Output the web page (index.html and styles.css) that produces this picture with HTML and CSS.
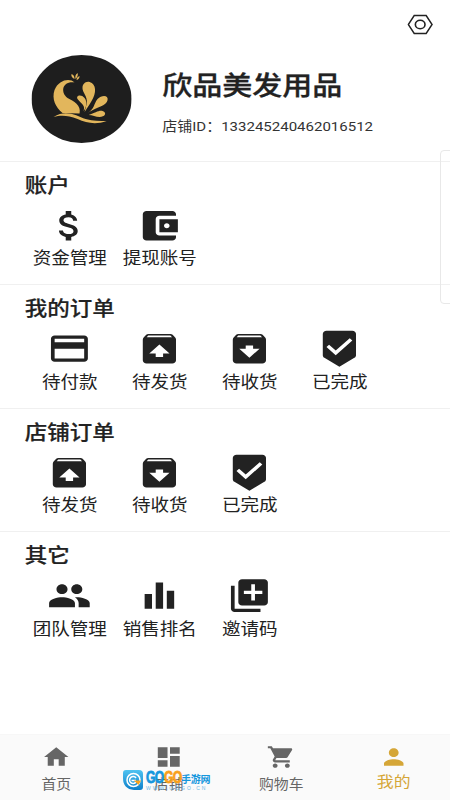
FILE: index.html
```
<!DOCTYPE html>
<html lang="zh-CN">
<head>
    <meta charset="UTF-8">
    <meta name="viewport" content="width=device-width, initial-scale=1.0">
    <title>我的</title>
    <link rel="stylesheet" href="styles.css">
</head>
<body>
    <svg class="defs" width="0" height="0">
        <symbol id="unarchive" viewBox="0 0 24 24"><path d="M20.55 5.22l-1.39-1.68C18.88 3.21 18.47 3 18 3H6c-.47 0-.88.21-1.15.55L3.46 5.22C3.17 5.57 3 6.01 3 6.5V19c0 1.1.89 2 2 2h14c1.1 0 2-.9 2-2V6.5c0-.49-.17-.93-.45-1.28zM12 9.5l5.5 5.5H14v2h-4v-2H6.5L12 9.5zM5.12 5l.82-1h12l.93 1H5.12z"/></symbol>
        <symbol id="archive" viewBox="0 0 24 24"><path d="M20.54 5.23l-1.39-1.68C18.88 3.21 18.47 3 18 3H6c-.47 0-.88.21-1.16.55L3.46 5.23C3.17 5.57 3 6.02 3 6.5V19c0 1.1.9 2 2 2h14c1.1 0 2-.9 2-2V6.5c0-.48-.17-.93-.46-1.27zM12 17.5L6.5 12H10v-2h4v2h3.500L12 17.5zM5.12 5l.81-1h12l.94 1H5.12z"/></symbol>
        <symbol id="done" viewBox="0 0 24 24"><path d="M19 1H5c-1.100 0-2 .9-2 2v12.930c0 .69.350 1.300.880 1.660L12 23l8.110-5.410c.53-.36.88-.97.89-1.660V3c0-1.100-.9-2-2-2zm-9 15l-5-5 1.410-1.410L10 13.170l7.590-7.590L19 7l-9 9z"/></symbol>
    </svg>
    <div class="page">
        <header class="profile">
            <svg class="settings" viewBox="0 0 24 22">
                <path d="M6.500 1.500h11L23 11l-5.500 9.500h-11L1 11z"/>
                <circle cx="12" cy="11" r="4.500"/>
            </svg>
            <svg class="avatar" viewBox="0 0 100 88" preserveAspectRatio="none">
                <ellipse class="avatar-bg" cx="50" cy="44" rx="50" ry="44"/>
                <path d="M43 27.500C38 22.500 27 25 23 35C20 44 24 52 31 58L48 58.500C50 50 42 46 36 43C29 38 30 26 43 27.500Z"/>
                <path d="M53 57C55 49 57 46 53 39C48 31 53 26 58 27C65 29 65 38 60 46C57 51 55 54 53 57Z"/>
                <path d="M52 56C54 50 50 49 46 44C44 40 50 39 53 43C56 47 55 52 52 56Z"/>
                <path d="M56 58C63 54 62 49 66 44C70 40 77 40 76 45C75 51 65 52 56 58Z"/>
                <path d="M57 60C64 58 67 55 71 56C76 58 73 62 68 62C64 62 61 60 57 60Z"/>
                <path d="M22 62C35 54 45 61 54 64C62 66 68 66 75 66C64 70 55 68 46 64C36 60 29 60 22 62Z"/>
                <path d="M43 24Q39 22 40 19Q43 20 43 24ZM44 24Q43 20 46 18Q47 21 44 24ZM45 25Q45 22 48 21Q48 24 45 25Z"/>
            </svg>
            <div class="profile-text">
                <h1>欣品美发用品</h1>
                <p>店铺ID：133245240462016512</p>
            </div>
        </header>
        <main>
            <section>
                <h2>账户</h2>
                <ul>
                    <li>
                        <svg viewBox="0 0 24 24"><path d="M11.800 10.900c-2.270-.59-3-1.200-3-2.150 0-1.090 1.010-1.850 2.700-1.850 1.780 0 2.440.85 2.500 2.100h2.210c-.07-1.720-1.120-3.300-3.210-3.810V3h-3v2.160c-1.940.42-3.500 1.680-3.500 3.610 0 2.310 1.910 3.460 4.700 4.130 2.500.6 3 1.480 3 2.410 0 .69-.49 1.790-2.700 1.790-2.060 0-2.870-.92-2.980-2.100h-2.200c.12 2.190 1.760 3.420 3.680 3.830V21h3v-2.150c1.950-.37 3.500-1.500 3.500-3.550 0-2.840-2.430-3.810-4.700-4.400z"/></svg>
                        资金管理
                    </li>
                    <li>
                        <svg viewBox="0 0 24 24"><path d="M21 18v1c0 1.100-.9 2-2 2H5c-1.110 0-2-.9-2-2V5c0-1.100.89-2 2-2h14c1.100 0 2 .9 2 2v1h-9c-1.110 0-2 .9-2 2v8c0 1.100.89 2 2 2h9zm-9-2h10V8H12v8zm4-2.500c-.83 0-1.500-.67-1.500-1.500s.67-1.500 1.500-1.500 1.500.67 1.500 1.500-.67 1.500-1.500 1.500z"/></svg>
                        提现账号
                    </li>
                </ul>
            </section>
            <section>
                <h2>我的订单</h2>
                <ul>
                    <li>
                        <svg viewBox="0 0 24 24"><path d="M20 4H4c-1.110 0-1.990.89-1.990 2L2 18c0 1.110.89 2 2 2h16c1.110 0 2-.89 2-2V6c0-1.110-.89-2-2-2zm0 14H4v-6h16v6zm0-10H4V6h16v2z"/></svg>
                        待付款
                    </li>
                    <li><svg><use href="#unarchive"/></svg>待发货</li>
                    <li><svg><use href="#archive"/></svg>待收货</li>
                    <li><svg><use href="#done"/></svg>已完成</li>
                </ul>
            </section>
            <section>
                <h2>店铺订单</h2>
                <ul>
                    <li><svg><use href="#unarchive"/></svg>待发货</li>
                    <li><svg><use href="#archive"/></svg>待收货</li>
                    <li><svg><use href="#done"/></svg>已完成</li>
                </ul>
            </section>
            <section>
                <h2>其它</h2>
                <ul>
                    <li>
                        <svg viewBox="0 0 24 24"><path d="M16 11c1.660 0 2.990-1.340 2.990-3S17.660 5 16 5c-1.660 0-3 1.340-3 3s1.340 3 3 3zm-8 0c1.660 0 2.990-1.340 2.990-3S9.660 5 8 5C6.340 5 5 6.340 5 8s1.340 3 3 3zm0 2c-2.330 0-7 1.170-7 3.500V19h14v-2.500c0-2.330-4.670-3.500-7-3.500zm8 0c-.29 0-.62.02-.97.05 1.160.84 1.970 1.970 1.970 3.450V19h6v-2.500c0-2.330-4.670-3.500-7-3.500z"/></svg>
                        团队管理
                    </li>
                    <li>
                        <svg viewBox="0 0 24 24"><path d="M4 11h4v9H4zM10 4h4v16h-4zM16 9h4v11h-4z"/></svg>
                        销售排名
                    </li>
                    <li>
                        <svg viewBox="0 0 24 24"><path d="M4 6H2v14c0 1.100.9 2 2 2h14v-2H4V6zm16-4H8c-1.100 0-2 .9-2 2v12c0 1.100.9 2 2 2h12c1.100 0 2-.9 2-2V4c0-1.100-.9-2-2-2zm-1 9h-4v4h-2v-4H9V9h4V5h2v4h4v2z"/></svg>
                        邀请码
                    </li>
                </ul>
            </section>
        </main>
        <nav>
            <a href="#">
                <svg viewBox="0 0 24 24"><path d="M10 20v-6h4v6h5v-8h3L12 3 2 12h3v8z"/></svg>
                首页
            </a>
            <a href="#">
                <svg viewBox="0 0 24 24"><path d="M3 13h8V3H3v10zm0 8h8v-6H3v6zm10 0h8V11h-8v10zm0-18v6h8V3h-8z"/></svg>
                店铺
            </a>
            <a href="#">
                <svg viewBox="0 0 24 24"><path d="M7 18c-1.100 0-1.990.9-1.990 2S5.900 22 7 22s2-.9 2-2-.9-2-2-2zM1 2v2h2l3.600 7.590-1.350 2.450c-.16.28-.25.61-.25.96 0 1.100.9 2 2 2h12v-2H7.420c-.14 0-.25-.11-.25-.25l.03-.12.900-1.630h7.450c.75 0 1.410-.41 1.750-1.030l3.580-6.490c.08-.14.12-.31.12-.48 0-.55-.45-1-1-1H5.210l-.94-2H1zm16 16c-1.100 0-1.990.9-1.990 2s.89 2 1.990 2 2-.9 2-2-.9-2-2-2z"/></svg>
                购物车
            </a>
            <a href="#" class="active">
                <svg viewBox="0 0 24 24"><path d="M12 12c2.210 0 4-1.790 4-4s-1.790-4-4-4-4 1.790-4 4 1.790 4 4 4zm0 2c-2.670 0-8 1.340-8 4v2h16v-2c0-2.660-5.330-4-8-4z"/></svg>
                我的
            </a>
        </nav>
    </div>
    <div class="side-handle"></div>
    <div class="watermark">
        <svg viewBox="0 0 20 20">
            <defs>
                <linearGradient id="blue" x1="0" y1="0" x2="0" y2="1">
                    <stop offset="0" stop-color="#4fc3f1"/>
                    <stop offset="1" stop-color="#0c7fca"/>
                </linearGradient>
            </defs>
            <path fill="url(#blue)" d="M3 0H16Q20 0 20 4V17Q20 20 17 20H11Q0 19 0 8V3Q0 0 3 0Z"/>
            <circle cx="10.500" cy="10" r="6.500" fill="none" stroke="#fff" stroke-width="1.500"/>
            <path d="M13 8A3.500 3.500 0 1 0 13 12M8.500 10.500H13" fill="none" stroke="#fff" stroke-width="1.500"/>
            <path d="M11 10.500H18L15.500 15Z" fill="#f9a11b"/>
        </svg>
        <div class="watermark-text">
            <div class="watermark-name"><b class="go">GO</b><b class="go orange">GO</b><span>手游网</span></div>
            <div class="watermark-url">WWW.GOGO.CN</div>
        </div>
    </div>
</body>
</html>
```
FILE: styles.css
```
* {
    box-sizing: border-box;
}
body {
    margin: 0;
    height: 800px;
    position: relative;
    overflow: hidden;
    background-color: #fff;
    color: #222;
    font-family: Roboto, "Noto Sans CJK SC", sans-serif;
}
.defs {
    position: absolute;
}
/* 400px layout, widened to fill the 450px screen */
.page {
    display: flex;
    flex-direction: column;
    width: 400px;
    height: 800px;
    transform: scaleX(1.125);
    transform-origin: 0 0;
}
svg {
    display: block;
    fill: currentColor;
}
h1, h2, p, ul {
    margin: 0;
    padding: 0;
}
.profile {
    display: flex;
    position: relative;
    height: 161px;
    padding: 55px 0 0 27.6px;
}
.settings {
    position: absolute;
    top: 14px;
    right: 15px;
    width: 23px;
    height: 21px;
    fill: none;
    stroke: #222;
    stroke-width: 1.5;
}
.avatar {
    width: 89px;
    height: 88px;
    fill: #e2b65c;
}
.avatar-bg {
    fill: #1e1e1e;
}
.profile-text {
    padding: 11px 0 0 27.6px;
}
h1 {
    font-size: 26.7px;
    font-weight: 500;
    line-height: 40px;
    -webkit-text-stroke: 0.3px;
}
.profile-text p {
    margin-top: 11px;
    color: #333;
    font-size: 13.35px;
    line-height: 20px;
}
section {
    height: 123.4px;
    padding: 12px 22px 0;
    border-top: 1px solid #f0f0f0;
}
h2 {
    font-size: 20px;
    font-weight: 500;
    line-height: 25px;
    -webkit-text-stroke: 0.2px;
}
ul {
    display: flex;
    list-style-type: none;
    margin-top: 7px;
}
li {
    display: flex;
    flex-direction: column;
    align-items: center;
    width: 80px;
    font-size: 16.5px;
    line-height: 27px;
    white-space: nowrap;
}
li svg {
    width: 39.4px;
    height: 39.4px;
}
nav {
    display: flex;
    height: 66px;
    margin-top: auto;
    background-color: #fafafa;
    border-top: 1px solid #f7f7f7;
}
nav a {
    display: flex;
    flex-direction: column;
    align-items: center;
    flex: 1;
    padding-top: 9px;
    color: #666;
    font-size: 13.2px;
    line-height: 29px;
    text-decoration: none;
}
nav svg {
    width: 26px;
    height: 26px;
}
nav a.active {
    color: #d5a637;
    font-size: 15px;
    line-height: 25px;
}
.side-handle {
    position: absolute;
    top: 150px;
    right: -4px;
    width: 14px;
    height: 154px;
    border: 1px solid #e8e8e8;
    border-radius: 4px;
}
.watermark {
    position: absolute;
    top: 770px;
    left: 123px;
    display: flex;
    gap: 3px;
}
.watermark > svg {
    width: 20px;
    height: 20px;
}
.watermark-name {
    display: flex;
    align-items: center;
    height: 16px;
    color: #1597dd;
    font-size: 10px;
    font-weight: 700;
    letter-spacing: -0.3px;
    white-space: nowrap;
}
.go {
    width: 17.5px;
    font-family: "Liberation Sans", sans-serif;
    font-size: 17px;
    letter-spacing: -1px;
    transform: scaleX(0.72);
    transform-origin: 0 50%;
    -webkit-text-stroke: 0.8px;
}
.orange {
    color: #f8a01c;
}
.watermark-url {
    color: #6db8e4;
    font-family: "Liberation Sans", sans-serif;
    font-size: 5px;
    line-height: 5px;
    letter-spacing: 2px;
}
```
